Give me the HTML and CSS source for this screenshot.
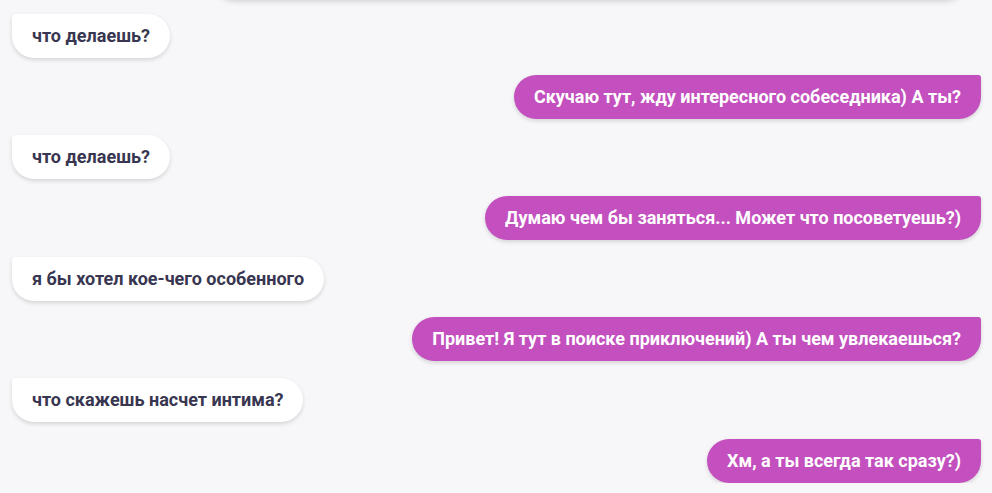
FILE: index.html
```html
<!DOCTYPE html>
<html>

<head>
  <title>Чат</title>
  <meta name="viewport" content="width=device-width,initial-scale=1">
  <link rel="stylesheet" href="styles.css">
</head>

<body>
  <div class="chat__top"></div>
  <section class="chat">
    <p class="msg msg--in">что делаешь?</p>
    <p class="msg msg--out">Скучаю тут, жду интересного собеседника) А ты?</p>
    <p class="msg msg--in">что делаешь?</p>
    <p class="msg msg--out">Думаю чем бы заняться... Может что посоветуешь?)</p>
    <p class="msg msg--in">я бы хотел кое-чего особенного</p>
    <p class="msg msg--out">Привет! Я тут в поиске приключений) А ты чем увлекаешься?</p>
    <p class="msg msg--in">что скажешь насчет интима?</p>
    <p class="msg msg--out">Хм, а ты всегда так сразу?)</p>
  </section>
</body>

</html>
```

FILE: styles.css
```css
body {
  margin: 0;
  background: #f7f7f9;
  font-family: Roboto, 'Noto Sans', sans-serif;
  overflow: hidden;
}

.chat__top {
  height: 40px;
  margin: -41px 24px 0 212px;
  background: #fff;
  border-radius: 0 0 24px 24px;
  box-shadow: 0 2px 6px rgba(0, 0, 0, 0.18);
}

.chat {
  display: flex;
  flex-direction: column;
  gap: 16.7px;
  padding: 15px 11px 0 12px;
}

.msg {
  margin: 0;
  padding: 0 20px;
  height: 44px;
  line-height: 44px;
  font-size: 18px;
  font-weight: 700;
  white-space: nowrap;
  box-shadow: 0 2px 4px rgba(0, 0, 0, 0.14);
}

.msg--in {
  align-self: flex-start;
  background: #fff;
  color: #383650;
  border-radius: 4px 23px 23px 23px;
}

.msg--out {
  align-self: flex-end;
  background: #c350be;
  color: #fff;
  border-radius: 23px 3px 23px 23px;
}
```
